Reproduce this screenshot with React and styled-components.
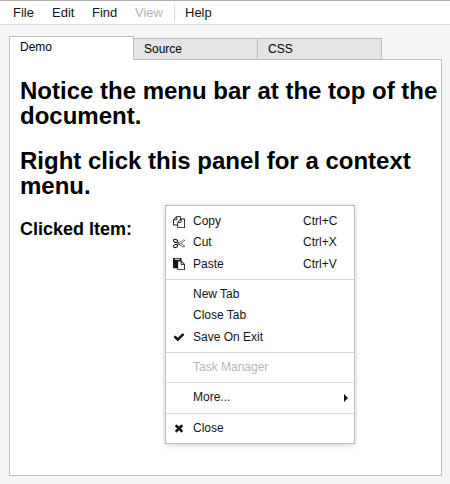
import React from "react";
import styled, { createGlobalStyle } from "styled-components";

const GlobalStyle = createGlobalStyle`
  * { box-sizing: border-box; }
  body {
    margin: 0;
    background: #f4f5f7;
    color: #000;
    font-family: "Liberation Sans", Arial, Helvetica, sans-serif;
    font-size: 12px;
    overflow: hidden;
  }
`;

const Page = styled.div`
  height: 484px;
  display: flex;
  flex-direction: column;
`;

const MenuBar = styled.nav`
  flex: none;
  height: 25px;
  display: flex;
  align-items: center;
  padding-left: 3px;
  background: #fff;
  border-top: 1px solid #adadad;
  border-bottom: 1px solid #dadada;
`;

const MenuBarItem = styled.div`
  flex: none;
  width: ${(p) => p.$width}px;
  padding-left: 10px;
  font-size: 13px;
  line-height: 22px;
  letter-spacing: ${(p) => p.$spacing || 0}px;
  white-space: nowrap;
  color: ${(p) => (p.$disabled ? "#b5b5b5" : "#141414")};
`;

const BarDivider = styled.div`
  width: 1px;
  height: 18px;
  background: #dadada;
`;

const Workspace = styled.main`
  flex: 1;
  display: flex;
  flex-direction: column;
  padding: 11px 8px 8px 9px;
`;

const TabStrip = styled.div`
  display: flex;
  align-items: flex-end;
  height: 24px;
  margin-bottom: -1px;
  z-index: 1;
`;

const Tab = styled.div`
  width: 125px;
  height: ${(p) => (p.$active ? 24 : 22)}px;
  margin-right: -1px;
  padding-left: 10px;
  border: 1px solid #bdbdbd;
  border-bottom-color: ${(p) => (p.$active ? "#fff" : "#bdbdbd")};
  background: ${(p) => (p.$active ? "#fff" : "#e4e4e4")};
  line-height: 20px;
  z-index: ${(p) => (p.$active ? 1 : 0)};
`;

const Panel = styled.section`
  flex: 1;
  padding: 18px 0 0 10px;
  background: #fff;
  border: 1px solid #bdbdbd;
`;

const Heading = styled.h1`
  margin: 0 0 20px;
  font-size: 24px;
  line-height: 25px;
  letter-spacing: ${(p) => p.$spacing || 0}px;
  white-space: nowrap;
`;

const SubHeading = styled.h2`
  margin: 0;
  font-size: 18px;
  line-height: 22px;
`;

const ContextMenu = styled.div`
  position: absolute;
  left: 165px;
  top: 205px;
  z-index: 2;
  width: 190px;
  height: 239px;
  padding-top: 5px;
  background: #fff;
  border: 1px solid #bdbdbd;
  box-shadow: 0 1px 6px rgba(0, 0, 0, 0.2);
`;

const MenuRow = styled.div`
  display: flex;
  align-items: center;
  height: 21.333px;
  line-height: 21px;
  white-space: nowrap;
  color: ${(p) => (p.$disabled ? "#b8b8b8" : "#141414")};
`;

const IconSlot = styled.span`
  display: flex;
  justify-content: center;
  width: 25px;
  margin-right: 2px;
`;

const Label = styled.span`
  flex: 1;
`;

const Shortcut = styled.span`
  width: 51px;
`;

const SubmenuArrow = styled.span`
  margin-right: 6px;
  border: solid transparent;
  border-width: 4px 0 4px 4px;
  border-left-color: #141414;
`;

const Separator = styled.div`
  height: 1px;
  margin: 4px 0;
  background: #dadada;
`;

const glyphs = {
  copy: "M1696 384q40 0 68 28t28 68v1216q0 40-28 68t-68 28h-960q-40 0-68-28t-28-68v-288h-544q-40 0-68-28t-28-68v-672q0-40 20-88t48-76l408-408q28-28 76-48t88-20h416q40 0 68 28t28 68v328q68-40 128-40h416zm-544 213l-299 299h299v-299zm-640-384l-299 299h299v-299zm196 647l316-316v-416h-384v416q0 40-28 68t-68 28h-416v640h512v-256q0-40 20-88t48-76zm956 804v-1152h-384v416q0 40-28 68t-68 28h-416v640h896z",
  cut: "M960 896q26 0 45 19t19 45-19 45-45 19-45-19-19-45 19-45 45-19zm300 64l507 398q28 20 25 56-5 35-35 51l-128 64q-13 7-29 7-17 0-31-8l-690-387-110 66q-8 4-12 5 14 49 10 97-7 77-56 147.5t-132 123.5q-132 84-277 84-136 0-222-78-90-84-79-207 7-76 56-147t131-124q132-84 278-84 83 0 151 31 9-13 22-22l122-73-122-73q-13-9-22-22-68 31-151 31-146 0-278-84-82-53-131-124t-56-147q-5-59 15.5-113t63.5-93q85-79 222-79 145 0 277 84 83 52 132 123t56 148q4 48-10 97 4 1 12 5l110 66 690-387q14-8 31-8 16 0 29 7l128 64q30 16 35 51 3 36-25 56zm-681-260q46-42 21-108t-106-117q-92-59-192-59-74 0-113 36-46 42-21 108t106 117q92 59 192 59 74 0 113-36zm-85 745q81-51 106-117t-21-108q-39-36-113-36-100 0-192 59-81 51-106 117t21 108q39 36 113 36 100 0 192-59zm178-613l96 58v-11q0-36 33-56l14-8-79-44-26 26q-3 3-10 11t-12 12q-2 2-4 3.5t-3 2.5zm224 224l96 32 736-576-128-64-768 431v113l-160 96 9 8q2 2 7 6 4 4 11 12t11 12l26 26zm704 416l128-64-520-408-177 138q-2 3-13 7z",
  paste: "M768 1664h896v-640h-416q-40 0-68-28t-28-68v-416h-384v1152zm256-1440v-64q0-13-9.5-22.5t-22.5-9.5h-704q-13 0-22.5 9.5t-9.5 22.5v64q0 13 9.5 22.5t22.5 9.5h704q13 0 22.5-9.5t9.5-22.5zm256 672h299l-299-299v299zm512 128v672q0 40-28 68t-68 28h-960q-40 0-68-28t-28-68v-160h-544q-40 0-68-28t-28-68v-1344q0-40 28-68t68-28h1088q40 0 68 28t28 68v328q21 13 36 28l408 408q28 28 48 76t20 88z",
  check: "M1671 566q0 40-28 68l-724 724-136 136q-28 28-68 28t-68-28l-136-136-362-362q-28-28-28-68t28-68l136-136q28-28 68-28t68 28l294 295 656-657q28-28 68-28t68 28l136 136q28 28 28 68z",
  close: "M1490 1322q0 40-28 68l-136 136q-28 28-68 28t-68-28l-294-294-294 294q-28 28-68 28t-68-28l-136-136q-28-28-28-68t28-68l294-294-294-294q-28-28-28-68t28-68l136-136q28-28 68-28t68 28l294 294 294-294q28-28 68-28t68 28l136 136q28 28 28 68t-28 68l-294 294 294 294q28 28 28 68z",
};

const Glyph = ({ name }) => (
  <svg width="12" height="12" viewBox="0 0 1792 1792" fill="#141414">
    <path d={glyphs[name]} />
  </svg>
);

const Item = ({ icon, label, shortcut, disabled, submenu }) => (
  <MenuRow $disabled={disabled}>
    <IconSlot>{icon && <Glyph name={icon} />}</IconSlot>
    <Label>{label}</Label>
    {shortcut && <Shortcut>{shortcut}</Shortcut>}
    {submenu && <SubmenuArrow />}
  </MenuRow>
);

export default function App() {
  return (
    <Page>
      <GlobalStyle />
      <MenuBar>
        <MenuBarItem $width={39}>File</MenuBarItem>
        <MenuBarItem $width={40}>Edit</MenuBarItem>
        <MenuBarItem $width={43}>Find</MenuBarItem>
        <MenuBarItem $width={49} $disabled>View</MenuBarItem>
        <BarDivider />
        <MenuBarItem $width={50}>Help</MenuBarItem>
      </MenuBar>
      <Workspace>
        <TabStrip>
          <Tab $active>Demo</Tab>
          <Tab>Source</Tab>
          <Tab>CSS</Tab>
        </TabStrip>
        <Panel>
          <Heading>Notice the menu bar at the top of the<br />document.</Heading>
          <Heading>Right click this panel for a context<br />menu.</Heading>
          <SubHeading>Clicked Item:</SubHeading>
        </Panel>
      </Workspace>
      <ContextMenu>
        <Item icon="copy" label="Copy" shortcut="Ctrl+C" />
        <Item icon="cut" label="Cut" shortcut="Ctrl+X" />
        <Item icon="paste" label="Paste" shortcut="Ctrl+V" />
        <Separator />
        <Item label="New Tab" />
        <Item label="Close Tab" />
        <Item icon="check" label="Save On Exit" />
        <Separator />
        <Item label="Task Manager" disabled />
        <Separator />
        <Item label="More..." submenu />
        <Separator />
        <Item icon="close" label="Close" />
      </ContextMenu>
    </Page>
  );
}
